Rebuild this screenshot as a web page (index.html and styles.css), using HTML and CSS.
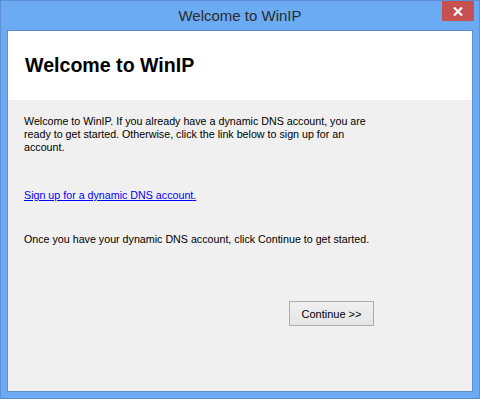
FILE: index.html
```html
<!DOCTYPE html>
<html lang="en">
<head>
    <meta charset="UTF-8">
    <title>Welcome to WinIP</title>
    <link rel="stylesheet" href="styles.css">
</head>
<body>
    <div class="window">
        <div class="titlebar">
            <span></span>
            <div class="title">Welcome to WinIP</div>
            <button class="close" aria-label="Close">
                <svg width="10" height="9" viewBox="0 0 10 9">
                    <path d="M1 0.5 L9 8.5 M9 0.5 L1 8.5" stroke="#fff" stroke-width="2.2" fill="none"/>
                </svg>
            </button>
        </div>
        <div class="client">
            <header class="banner">
                <h1>Welcome to WinIP</h1>
            </header>
            <main class="content">
                <p class="intro">Welcome to WinIP. If you already have a dynamic DNS account, you are ready to get started. Otherwise, click the link below to sign up for an account.</p>
                <p class="signup"><a href="#">Sign up for a dynamic DNS account.</a></p>
                <p class="next">Once you have your dynamic DNS account, click Continue to get started.</p>
                <div class="actions">
                    <button class="btn">Continue &gt;&gt;</button>
                </div>
            </main>
        </div>
    </div>
</body>
</html>
```

FILE: styles.css
```css
body {
    margin: 0;
    padding: 0;
    font-family: "Liberation Sans", Arial, sans-serif;
}

.window {
    width: 480px;
    height: 399px;
    box-sizing: border-box;
    background-color: #6aabf4;
    border: 1px solid #5c90d2;
    display: flex;
    flex-direction: column;
}

.titlebar {
    height: 29px;
    display: grid;
    grid-template-columns: 1fr auto 1fr;
    align-items: start;
}

.title {
    font-size: 15px;
    color: #2b2b2b;
    line-height: 27px;
    padding-top: 1px;
}

.close {
    justify-self: end;
    margin-right: 5px;
    width: 32px;
    height: 20px;
    padding: 0;
    border: none;
    background-color: #c75050;
    display: flex;
    align-items: center;
    justify-content: center;
}

.client {
    flex: 1;
    margin: 0 6px 6px;
    border: 1px solid #5e8fcb;
    background-color: #f0f0f0;
    display: flex;
    flex-direction: column;
}

.banner {
    background-color: white;
    height: 69px;
    padding: 0 17px;
    display: flex;
    align-items: center;
}

.banner h1 {
    margin: 0;
    font-size: 19.6px;
    font-weight: bold;
    color: black;
}

.content {
    padding: 0 16px;
    font-size: 10.7px;
    line-height: 13px;
    color: black;
    flex: 1;
    display: flex;
    flex-direction: column;
}

.content p {
    margin: 0;
}

.intro {
    margin-top: 15px !important;
    width: 360px;
}

.signup {
    margin-top: 35px !important;
}

.signup a {
    color: #0000ff;
}

.next {
    margin-top: 31px !important;
}

.actions {
    margin-top: 55px;
    padding-left: 265px;
}

.btn {
    width: 85px;
    height: 25px;
    border: 1px solid #adadad;
    background: linear-gradient(#f0f0f0, #e5e5e5);
    font-family: "Liberation Sans", Arial, sans-serif;
    font-size: 11px;
    color: black;
    padding: 0;
}
```
